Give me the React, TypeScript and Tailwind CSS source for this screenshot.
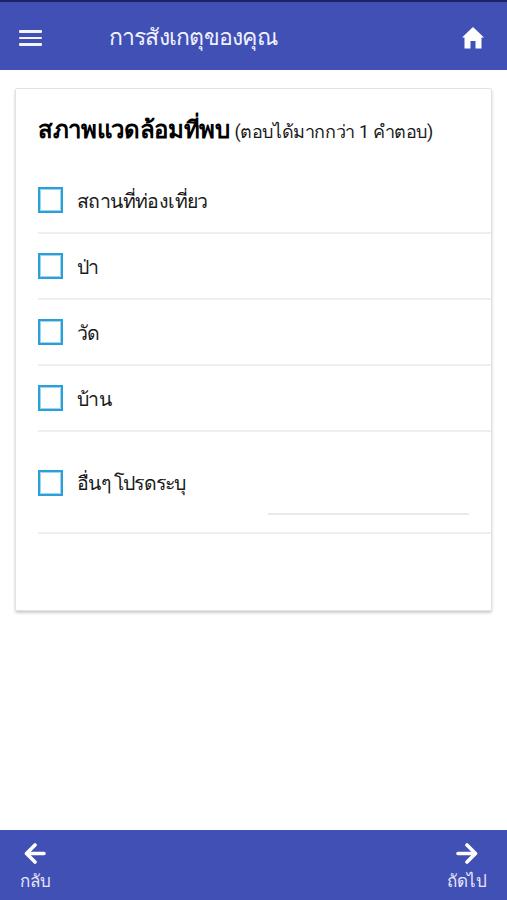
import React, { useState } from 'react'

const options = ['สถานที่ท่องเที่ยว', 'ป่า', 'วัด', 'บ้าน']

const Checkbox = ({ checked }: { checked: boolean }) => (
  <span
    className={`block h-[26px] w-[25px] shrink-0 border-2 border-[#2b9fd8] shadow-[inset_0_0_0_1px_rgba(43,159,216,0.45)] ${checked ? 'bg-[#2b9fd8]' : 'bg-white'}`}
  />
)

const App = () => {
  const [selected, setSelected] = useState<string[]>([])

  const toggle = (label: string) => {
    setSelected((prev) => (prev.includes(label) ? prev.filter((item) => item !== label) : [...prev, label]))
  }

  return (
    <div className="flex h-[900px] w-full flex-col overflow-hidden bg-white font-['Roboto',sans-serif] text-[#1a1a1a]">
      {/* Header */}
      <header className="flex h-[70px] shrink-0 items-center border-t-2 border-[#1c2464] bg-[#4150b5] pt-1 pl-[19px] pr-[23px] text-white">
        <button aria-label="Menu" className="flex flex-col gap-[4px]">
          <span className="block h-[2.5px] w-[22.5px] rounded-[1px] bg-[#f4f4ff]" />
          <span className="block h-[2.5px] w-[22.5px] rounded-[1px] bg-[#f4f4ff]" />
          <span className="block h-[2.5px] w-[22.5px] rounded-[1px] bg-[#f4f4ff]" />
        </button>
        <h1 className="ml-[67px] flex-1 text-[23px] tracking-[-0.75px] text-[#f0f0ff]">การสังเกตุของคุณ</h1>
        <button aria-label="Home">
          <svg width="22" height="22" viewBox="0 0 22 22" fill="currentColor">
            <path d="M11 0 0 10.5h2.5V21.5h6v-7.5h5v7.5h6v-11H22z" />
          </svg>
        </button>
      </header>

      {/* Form card */}
      <main className="flex-1 px-[15px] pt-[18px]">
        <section className="h-[523px] rounded-[2px] border border-[#e2e2e2] pl-[22px] shadow-[0_2px_3px_rgba(0,0,0,0.2)]">
          <h2 className="flex h-[79px] items-baseline gap-[5px] whitespace-nowrap pt-[23px] text-[24px] font-bold tracking-[-0.35px] text-black">
            สภาพแวดล้อมที่พบ
            <small className="text-[18px] font-normal tracking-[-0.4px] text-[#1a1a1a]">(ตอบได้มากกว่า 1 คำตอบ)</small>
          </h2>
          {options.map((label) => (
            <button
              key={label}
              onClick={() => toggle(label)}
              className="flex h-[66px] w-full items-center gap-[14px] border-b-2 border-[#eeeeee] text-left text-[19.5px] tracking-[-0.6px]"
            >
              <Checkbox checked={selected.includes(label)} />
              <span className="pt-[3px]">{label}</span>
            </button>
          ))}
          <div className="flex h-[102px] items-center border-b-2 border-[#eeeeee] text-[19.5px] tracking-[-0.75px]">
            <button onClick={() => toggle('other')} className="flex w-[230px] items-center gap-[14px] pt-px">
              <Checkbox checked={selected.includes('other')} />
              <span className="pt-[3px]">อื่นๆ โปรดระบุ</span>
            </button>
            <input aria-label="อื่นๆ" className="mt-[25px] h-10 w-[201px] border-b-2 border-[#e9e9e9] outline-none" />
          </div>
        </section>
      </main>

      {/* Navigation */}
      <footer className="flex h-[70px] shrink-0 justify-between bg-[#4150b5] px-5 pt-[13px] text-[17px] tracking-[-0.2px] text-[#e6e6fa]">
        <button className="flex flex-col items-center gap-[5px]">
          <svg width="22" height="21" viewBox="0 0 22 21" fill="none" stroke="#fff" strokeWidth="3.6" strokeLinecap="round" strokeLinejoin="round">
            <path d="M20 10.5H3M11 2l-8.5 8.5L11 19" />
          </svg>
          กลับ
        </button>
        <button className="flex flex-col items-center gap-[5px]">
          <svg width="22" height="21" viewBox="0 0 22 21" fill="none" stroke="#fff" strokeWidth="3.6" strokeLinecap="round" strokeLinejoin="round">
            <path d="M2 10.5h17M11 2l8.5 8.5L11 19" />
          </svg>
          ถัดไป
        </button>
      </footer>
    </div>
  )
}

export default App
